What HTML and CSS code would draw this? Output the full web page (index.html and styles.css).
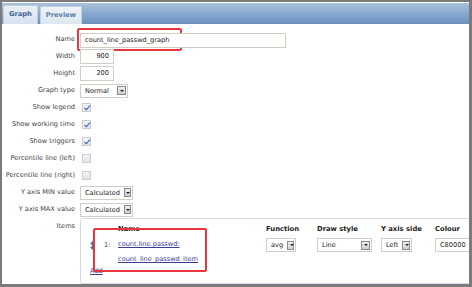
FILE: index.html
```html
<!DOCTYPE html>
<html>
<head>
<meta charset="utf-8">
<link rel="stylesheet" href="styles.css">
</head>
<body>
<div class="frame">
  <div class="tabbar">
    <div class="tab active">Graph</div>
    <div class="tab">Preview</div>
  </div>
  <div class="form">
    <div class="lbl">Name</div>
    <div class="fld"><span class="hl hl-name"><span class="input name-in">count_line_passwd_graph</span></span></div>

    <div class="lbl">Width</div>
    <div class="fld"><span class="input num">900</span></div>

    <div class="lbl">Height</div>
    <div class="fld"><span class="input num">200</span></div>

    <div class="lbl">Graph type</div>
    <div class="fld"><span class="select w-normal">Normal<span class="dd"></span></span></div>

    <div class="lbl">Show legend</div>
    <div class="fld"><span class="cb checked"></span></div>

    <div class="lbl">Show working time</div>
    <div class="fld"><span class="cb checked"></span></div>

    <div class="lbl">Show triggers</div>
    <div class="fld"><span class="cb checked"></span></div>

    <div class="lbl">Percentile line (left)</div>
    <div class="fld"><span class="cb"></span></div>

    <div class="lbl">Percentile line (right)</div>
    <div class="fld"><span class="cb"></span></div>

    <div class="lbl">Y axis MIN value</div>
    <div class="fld"><span class="select w-calc">Calculated<span class="dd"></span></span></div>

    <div class="lbl">Y axis MAX value</div>
    <div class="fld"><span class="select w-calc">Calculated<span class="dd"></span></span></div>

    <div class="lbl items-lbl">Items</div>
    <div class="fld items-fld">
      <div class="items">
        <div class="hl hl-items"></div>
        <div class="irow ihead">
          <span></span><span></span>
          <span class="th">Name</span>
          <span class="th">Function</span>
          <span class="th">Draw style</span>
          <span class="th">Y axis side</span>
          <span class="th">Colour</span>
        </div>
        <div class="irow idata">
          <span class="drag"><svg width="5" height="9" viewBox="0 0 5 9"><path d="M2.5 0 L5 3 H3.3 V6 H5 L2.5 9 L0 6 H1.7 V3 H0 Z" fill="#3b6fb6"/></svg></span>
          <span class="num-lbl">1:</span>
          <span class="iname"><a class="lnk">count.line.passwd:</a><a class="lnk">count_line_passwd_item</a></span>
          <span><span class="select w-avg">avg<span class="dd"></span></span></span>
          <span><span class="select w-line">Line<span class="dd"></span></span></span>
          <span><span class="select w-left">Left<span class="dd"></span></span></span>
          <span><span class="input colour">C80000</span></span>
        </div>
        <div class="add"><a class="lnk">Add</a></div>
      </div>
    </div>
  </div>
</div>
</body>
</html>
```
FILE: styles.css
```css
html, body {
  margin: 0;
  padding: 0;
}
body {
  width: 472px;
  height: 287px;
  background: #7b7b7b;
  font-family: "DejaVu Sans", Verdana, sans-serif;
  font-size: 6.6px;
  color: #3a3a3a;
  overflow: hidden;
}
.frame {
  box-sizing: border-box;
  margin: 2px 3px 0 2px;
  width: 467px;
  height: 282px;
  background: #fff;
  overflow: hidden;
  position: relative;
}
.tabbar {
  margin-top: 1px;
  height: 21px;
  box-sizing: border-box;
  background: linear-gradient(#a9c2dc, #7fa1c9 70%, #6d93bf);
  border-bottom: 1px solid #6a8fba;
  display: flex;
  align-items: flex-end;
  padding-left: 1px;
  gap: 2px;
}
.tab {
  height: 17px;
  line-height: 17px;
  padding: 0 5px;
  font-weight: bold;
  font-size: 6.7px;
  color: #5a80ad;
  background: linear-gradient(#eef3f8, #dde6f0);
  border: 1px solid #c0cfe0;
  border-bottom: none;
  margin-bottom: -1px;
}
.tab.active {
  background: linear-gradient(#e8eef5, #d8e2ee);
  color: #3e6594;
  height: 18px;
}
.form {
  display: grid;
  grid-template-columns: 73px 1fr;
  column-gap: 5px;
  grid-auto-rows: 17px;
  padding-top: 7px;
}
.lbl {
  text-align: right;
  line-height: 17px;
  white-space: nowrap;
  color: #404040;
}
.fld {
  display: flex;
  align-items: center;
}
.input {
  box-sizing: border-box;
  height: 15px;
  line-height: 13px;
  border: 1px solid #cfcfc6;
  background: #fff;
  padding: 0 4px;
  color: #222;
  display: inline-block;
}
.name-in {
  width: 206px;
}
.num {
  width: 34px;
  text-align: right;
}
.hl {
  border: 2px solid #e8373c;
  border-radius: 2px;
  box-sizing: border-box;
}
.hl-name {
  display: inline-block;
  margin-left: -3px;
  padding: 3px 1px 3px 1px;
  height: 23px;
  width: 105px;
  overflow: visible;
  white-space: nowrap;
}
.select {
  box-sizing: border-box;
  display: inline-flex;
  align-items: center;
  justify-content: space-between;
  height: 14px;
  border: 1px solid #cfcfc6;
  background: #fff;
  padding: 0 1px 0 4px;
  color: #222;
  white-space: nowrap;
}
.dd {
  width: 9px;
  height: 9px;
  box-sizing: border-box;
  border: 1px solid #8a8a8a;
  background: linear-gradient(#eeeeee, #cfcfcf);
  position: relative;
  margin-left: 4px;
}
.dd::after {
  content: "";
  position: absolute;
  left: 1.5px;
  top: 2.5px;
  border-left: 2px solid transparent;
  border-right: 2px solid transparent;
  border-top: 2px solid #222;
}
.w-normal { width: 48px; }
.w-calc { width: 53px; }
.w-avg { width: 30px; }
.w-line { width: 55px; }
.w-left { width: 31px; }
.cb {
  box-sizing: border-box;
  width: 9px;
  height: 9px;
  margin-left: 2px;
  border: 1px solid #c9ccd4;
  background: linear-gradient(#f2f3f6, #e2e4ea);
  position: relative;
}
.cb.checked::after {
  content: "";
  position: absolute;
  left: 2.5px;
  top: 0px;
  width: 1.5px;
  height: 4.5px;
  border-right: 1.2px solid #2b49b5;
  border-bottom: 1.2px solid #2b49b5;
  transform: rotate(40deg);
}
.items-lbl {
  line-height: 17px;
}
.items-fld {
  align-items: flex-start;
}
.items {
  box-sizing: border-box;
  position: relative;
  width: 400px;
  height: 66px;
  border: 1px solid #d5dbe6;
  border-radius: 2px;
  padding-left: 9px;
}
.irow {
  display: grid;
  grid-template-columns: 14px 14px 148px 51px 64px 54px auto;
  align-items: center;
}
.ihead {
  height: 19px;
  padding-top: 1px;
  box-sizing: border-box;
}
.th {
  font-weight: bold;
  color: #222;
  font-size: 6.8px;
}
.idata {
  align-items: start;
}
.drag {
  padding-top: 3px;
  display: flex;
}
.num-lbl {
  line-height: 14px;
}
.iname {
  display: flex;
  flex-direction: column;
  line-height: 15px;
  margin-top: -1px;
}
.lnk {
  color: #3b3b9c;
  text-decoration: underline;
}
.colour {
  width: 40px;
  height: 14px;
  line-height: 12px;
}
.add {
  margin-top: -1px;
  line-height: 10px;
}
.hl-items {
  position: absolute;
  left: 12px;
  top: 9px;
  width: 114px;
  height: 44px;
  pointer-events: none;
}
```
